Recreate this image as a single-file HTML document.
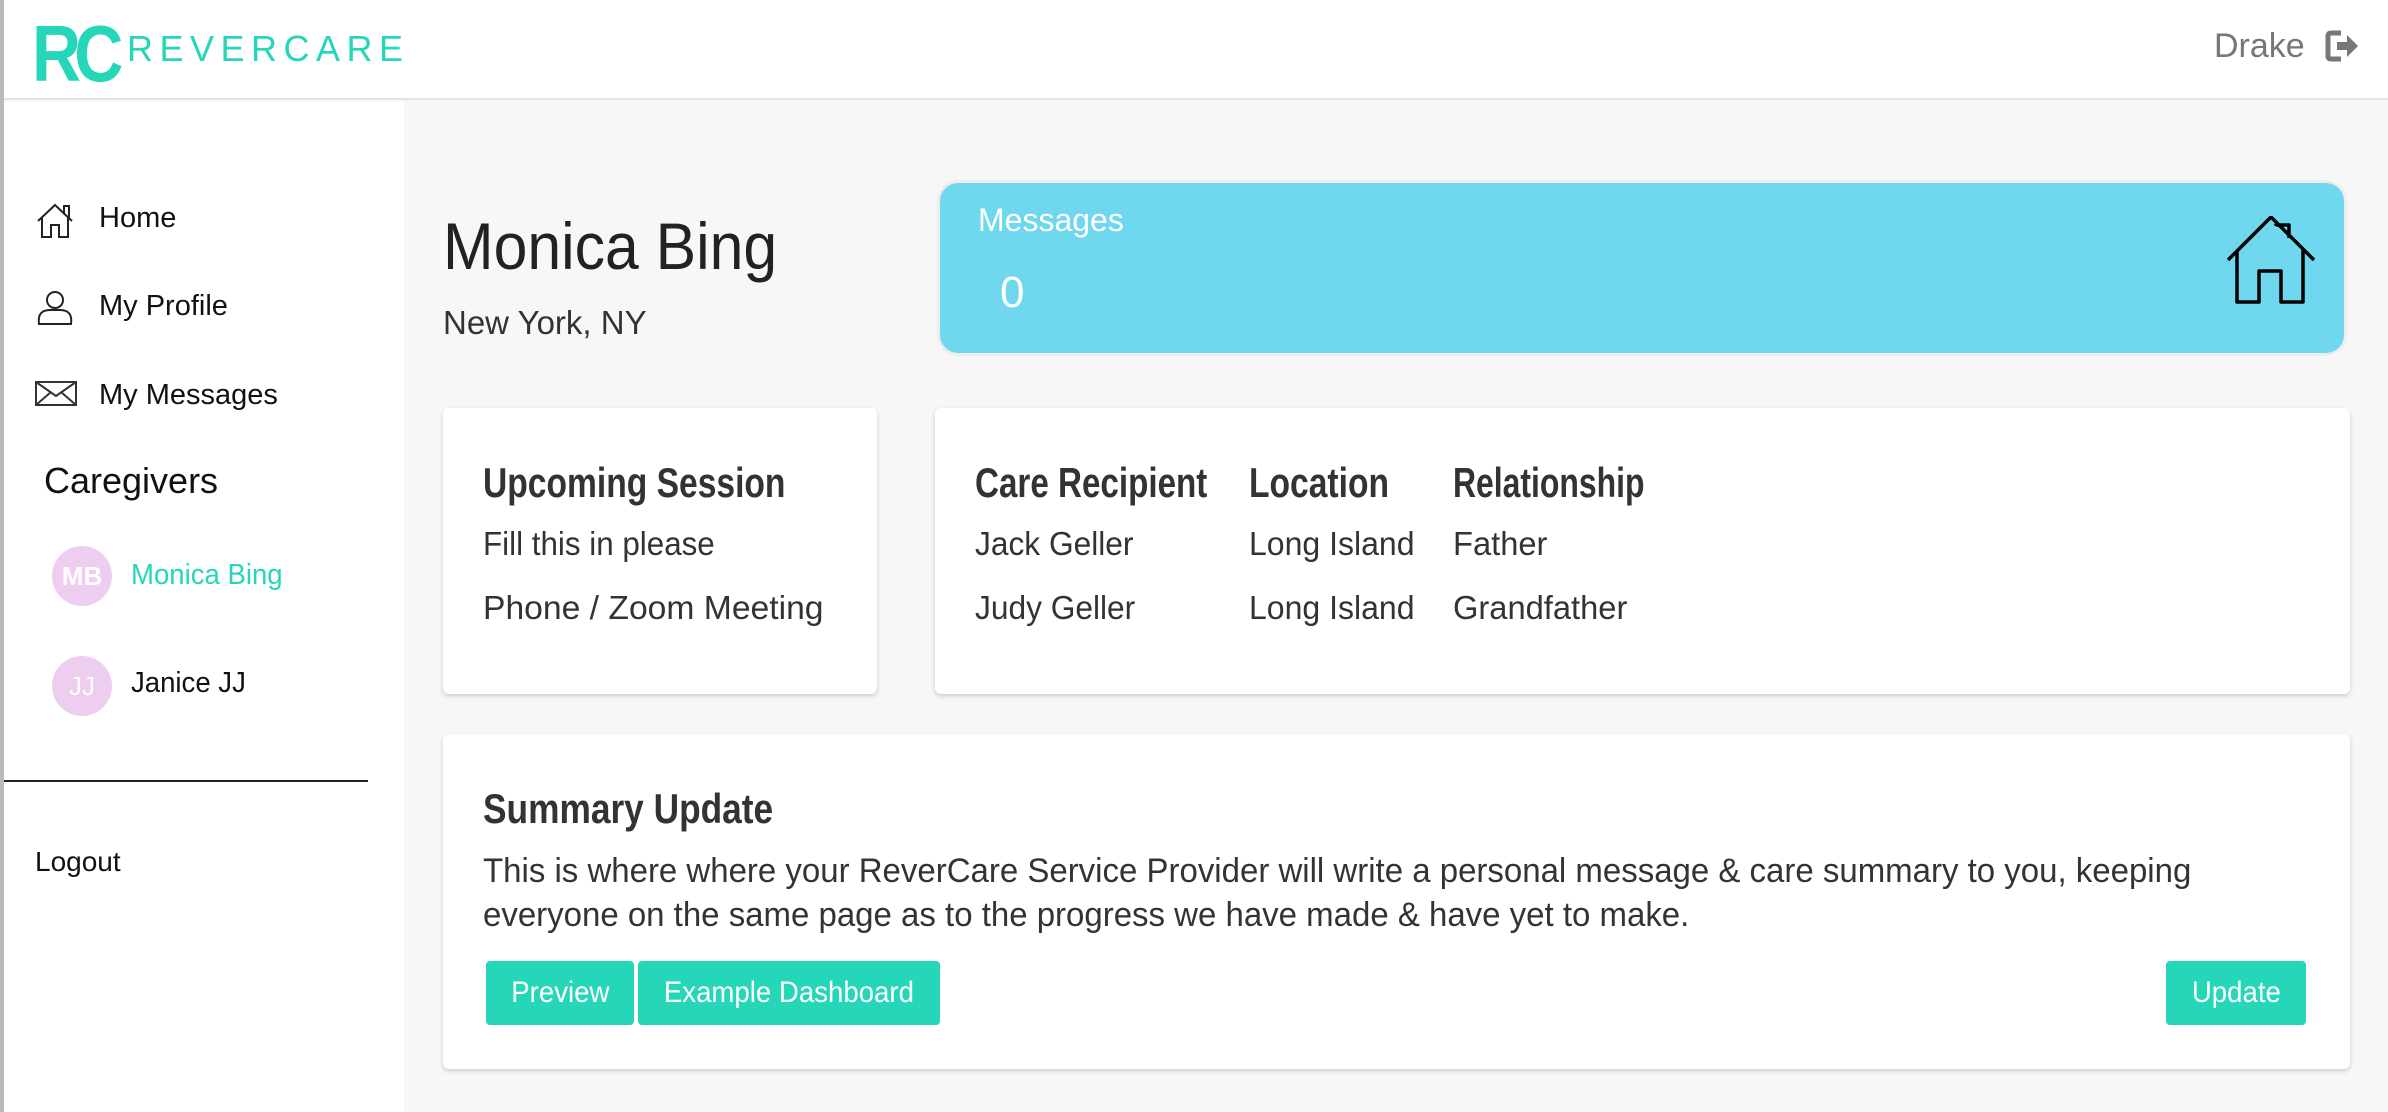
<!DOCTYPE html>
<html><head><meta charset="utf-8"><style>
*{margin:0;padding:0;box-sizing:border-box}
body{width:2388px;height:1112px;overflow:hidden;background:#f7f7f7;font-family:"Liberation Sans",sans-serif;position:relative;color:#333}
.a{position:absolute;white-space:nowrap;line-height:1.2}
.n{display:inline-block;transform:scaleX(.7);transform-origin:left center}
.card{position:absolute;background:#fff;border-radius:6px;box-shadow:0 2px 5px rgba(0,0,0,.18)}
.btn{position:absolute;background:#26d6b8;border-radius:4px;color:#fff;font-size:30px;text-align:center;line-height:64px}
</style></head><body>
<div style="position:absolute;left:0;top:0;width:2388px;height:100px;background:#fff;border-bottom:2px solid #e3e3e3"></div>
<div style="position:absolute;left:0;top:0;width:4px;height:1112px;background:#bbb"></div>
<div style="position:absolute;left:4px;top:102px;width:400px;height:1010px;background:#fff"></div>
<!-- logo -->
<div class="a" style="left:32px;top:6px;font-size:80px;font-weight:bold;color:#26d6b8;letter-spacing:-8px"><span class="n" style="transform:scaleX(.85)">RC</span></div>
<div class="a" style="left:127px;top:27px;font-size:36px;color:#26d6b8;letter-spacing:6.5px;font-weight:300">REVERCARE</div>
<div class="a" style="left:2214px;top:26px;font-size:34px;color:#777">Drake</div>
<svg style="position:absolute;left:2325px;top:30px" width="36" height="32" viewBox="0 0 36 32"><path d="M16 3H6Q3 3 3 6V26Q3 29 6 29H16" fill="none" stroke="#777" stroke-width="5"/><path d="M12 12H22V5L33 16L22 27V20H12Z" fill="#777"/></svg>
<!-- sidebar -->
<svg style="position:absolute;left:36px;top:203px" width="38" height="36" viewBox="0 0 38 36" fill="none" stroke="#222" stroke-width="2"><path d="M2 18L19 2L36 18M28 10V3H33V15M6 15V34H15V22H23V34H32V15"/></svg>
<div class="a" style="left:99px;top:201px;font-size:29px;color:#111">Home</div>
<svg style="position:absolute;left:36px;top:290px" width="38" height="36" viewBox="0 0 38 36" fill="none" stroke="#222" stroke-width="2"><circle cx="19" cy="10" r="8"/><path d="M3 34Q1 20 14 20H24Q37 20 35 34Z"/></svg>
<div class="a" style="left:99px;top:289px;font-size:29px;color:#111">My Profile</div>
<svg style="position:absolute;left:35px;top:381px" width="42" height="26" viewBox="0 0 42 26" fill="none" stroke="#333" stroke-width="2"><rect x="1" y="1" width="40" height="23"/><path d="M1 1L21 15L41 1M1 24L16 11M41 24L26 11"/></svg>
<div class="a" style="left:99px;top:378px;font-size:29px;color:#111">My Messages</div>
<div class="a" style="left:44px;top:459px;font-size:36px;color:#111">Caregivers</div>
<div style="position:absolute;left:52px;top:546px;width:60px;height:60px;border-radius:50%;background:#edcdf0;color:#fff;font-size:26px;font-weight:bold;text-align:center;line-height:60px">MB</div>
<div class="a" style="left:131px;top:558px;font-size:29px;color:#26d6b8"><span class="n" style="transform:scaleX(.95)">Monica Bing</span></div>
<div style="position:absolute;left:52px;top:656px;width:60px;height:60px;border-radius:50%;background:#edcdf0;color:#fff;font-size:26px;text-align:center;line-height:60px">JJ</div>
<div class="a" style="left:131px;top:666px;font-size:29px;color:#111"><span class="n" style="transform:scaleX(.95)">Janice JJ</span></div>
<div style="position:absolute;left:4px;top:780px;width:364px;height:2px;background:#222"></div>
<div class="a" style="left:35px;top:845px;font-size:28px;color:#111">Logout</div>
<!-- main -->
<div class="a" style="left:443px;top:207px;font-size:66px;color:#222"><span class="n" style="transform:scaleX(.92)">Monica Bing</span></div>
<div class="a" style="left:443px;top:303px;font-size:33px;color:#333"><span class="n" style="transform:scaleX(1)">New York, NY</span></div>
<div style="position:absolute;left:940px;top:183px;width:1404px;height:170px;background:#6fd8ef;border-radius:18px;box-shadow:0 0 0 3px #eee"></div>
<div class="a" style="left:978px;top:201px;font-size:32px;color:#fff"><span class="n" style="transform:scaleX(1)">Messages</span></div>
<div class="a" style="left:1000px;top:267px;font-size:44px;color:#fff">0</div>
<svg style="position:absolute;left:2226px;top:216px" width="92" height="88" viewBox="0 0 92 88" fill="none" stroke="#000" stroke-width="3.5" stroke-linejoin="round"><path d="M2 44L45 1L88 44M50 10V9H63V22M11 36V86H33V55H55V86H77V34"/></svg>
<div class="card" style="left:443px;top:408px;width:434px;height:286px"></div>
<div class="card" style="left:935px;top:408px;width:1415px;height:286px"></div>
<div class="card" style="left:443px;top:734px;width:1907px;height:335px"></div>
<div class="a" style="left:483px;top:458px;font-size:42px;font-weight:bold;color:#333"><span class="n" style="transform:scaleX(.8)">Upcoming Session</span></div>
<div class="a" style="left:483px;top:524px;font-size:33px"><span class="n" style="transform:scaleX(.95)">Fill this in please</span></div>
<div class="a" style="left:483px;top:588px;font-size:33px"><span class="n" style="transform:scaleX(1.02)">Phone / Zoom Meeting</span></div>
<div class="a" style="left:975px;top:458px;font-size:42px;font-weight:bold"><span class="n" style="transform:scaleX(.79)">Care Recipient</span></div>
<div class="a" style="left:1249px;top:458px;font-size:42px;font-weight:bold"><span class="n" style="transform:scaleX(.8)">Location</span></div>
<div class="a" style="left:1453px;top:458px;font-size:42px;font-weight:bold"><span class="n" style="transform:scaleX(.76)">Relationship</span></div>
<div class="a" style="left:975px;top:524px;font-size:33px"><span class="n" style="transform:scaleX(.96)">Jack Geller</span></div>
<div class="a" style="left:975px;top:588px;font-size:33px"><span class="n" style="transform:scaleX(.96)">Judy Geller</span></div>
<div class="a" style="left:1249px;top:524px;font-size:33px"><span class="n" style="transform:scaleX(.97)">Long Island</span></div>
<div class="a" style="left:1249px;top:588px;font-size:33px"><span class="n" style="transform:scaleX(.97)">Long Island</span></div>
<div class="a" style="left:1453px;top:524px;font-size:33px"><span class="n" style="transform:scaleX(.99)">Father</span></div>
<div class="a" style="left:1453px;top:588px;font-size:33px"><span class="n" style="transform:scaleX(.99)">Grandfather</span></div>
<div class="a" style="left:483px;top:784px;font-size:42px;font-weight:bold"><span class="n" style="transform:scaleX(.84)">Summary Update</span></div>
<div class="a" style="left:483px;top:851px;font-size:34px"><span class="n" style="transform:scaleX(.97)">This is where where your ReverCare Service Provider will write a personal message &amp; care summary to you, keeping</span></div>
<div class="a" style="left:483px;top:895px;font-size:34px"><span class="n" style="transform:scaleX(.97)">everyone on the same page as to the progress we have made &amp; have yet to make.</span></div>
<div class="btn" style="left:486px;top:961px;width:148px"><span class="n" style="transform:scaleX(.92);transform-origin:center">Preview</span></div>
<div class="btn" style="left:638px;top:961px;width:302px"><span class="n" style="transform:scaleX(.92);transform-origin:center">Example Dashboard</span></div>
<div class="btn" style="left:2166px;top:961px;width:140px"><span class="n" style="transform:scaleX(.92);transform-origin:center">Update</span></div>
</body></html>
